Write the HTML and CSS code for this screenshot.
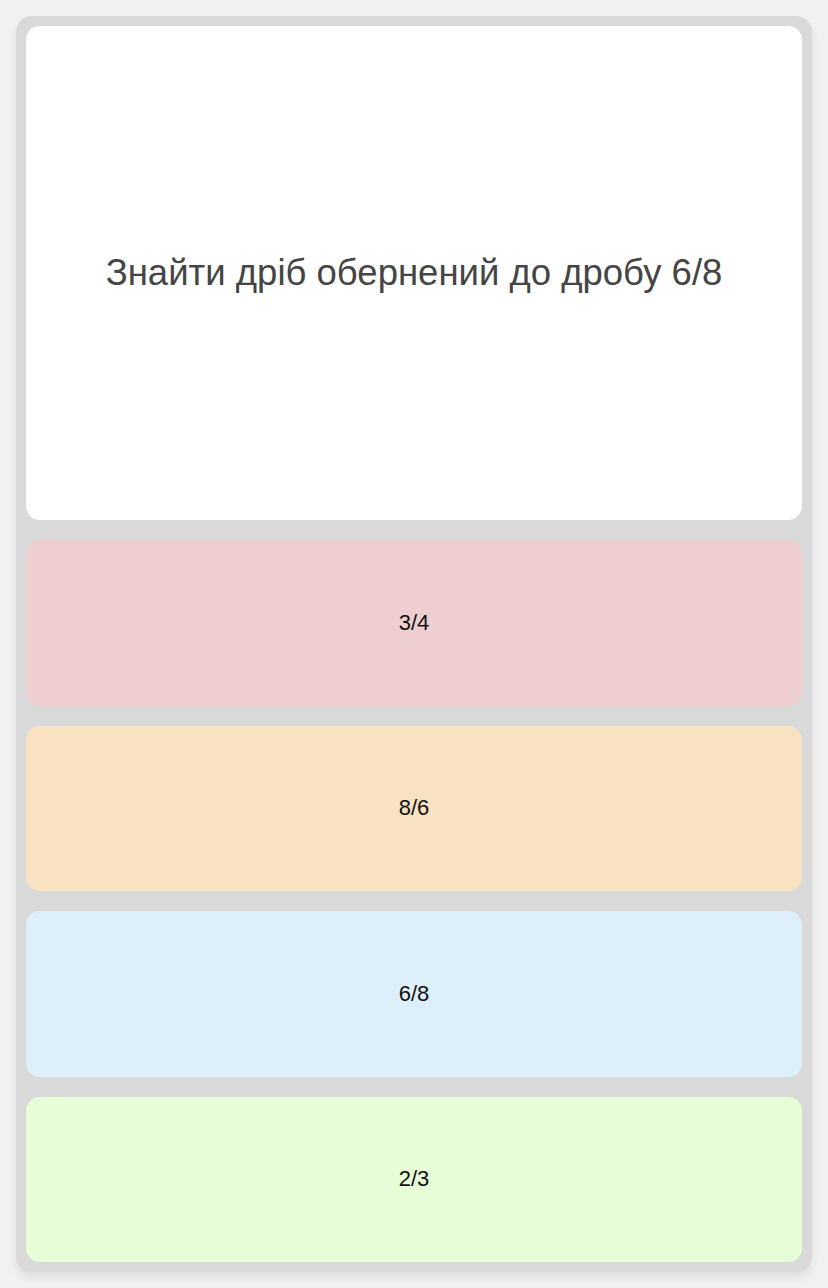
FILE: index.html
```html
<!DOCTYPE html>
<html lang="uk">
<head>
<meta charset="utf-8">
<title>Quiz</title>
<link rel="stylesheet" href="styles.css">
</head>
<body>
<main class="quiz">
  <section class="question">
    <p class="question-text">Знайти дріб обернений до дробу 6/8</p>
  </section>
  <div class="answer answer-red">3/4</div>
  <div class="answer answer-orange">8/6</div>
  <div class="answer answer-blue">6/8</div>
  <div class="answer answer-green">2/3</div>
</main>
</body>
</html>
```
FILE: styles.css
```css
html, body {
  margin: 0;
  padding: 0;
}
body {
  background: #f1f1f1;
  padding: 16px;
  font-family: "Liberation Sans", Arial, sans-serif;
  height: 1288px;
  box-sizing: border-box;
}
.quiz {
  background: #d9d9d9;
  border-radius: 16px;
  padding: 10px;
  display: flex;
  flex-direction: column;
  gap: 20px;
  box-shadow: 0 6px 10px rgba(0, 0, 0, 0.08);
}
.question {
  background: #ffffff;
  border-radius: 14px;
  height: 494px;
  display: flex;
  align-items: center;
  justify-content: center;
}
.question-text {
  margin: 0;
  font-size: 36.5px;
  color: #454545;
}
.answer {
  height: 165.5px;
  border-radius: 14px;
  display: flex;
  align-items: center;
  justify-content: center;
  font-size: 22px;
  color: #111111;
}
.answer-red { background: #efcecf; }
.answer-orange { background: #f8e2c2; }
.answer-blue { background: #ddf0fa; }
.answer-green { background: #e6fdd7; }
```
